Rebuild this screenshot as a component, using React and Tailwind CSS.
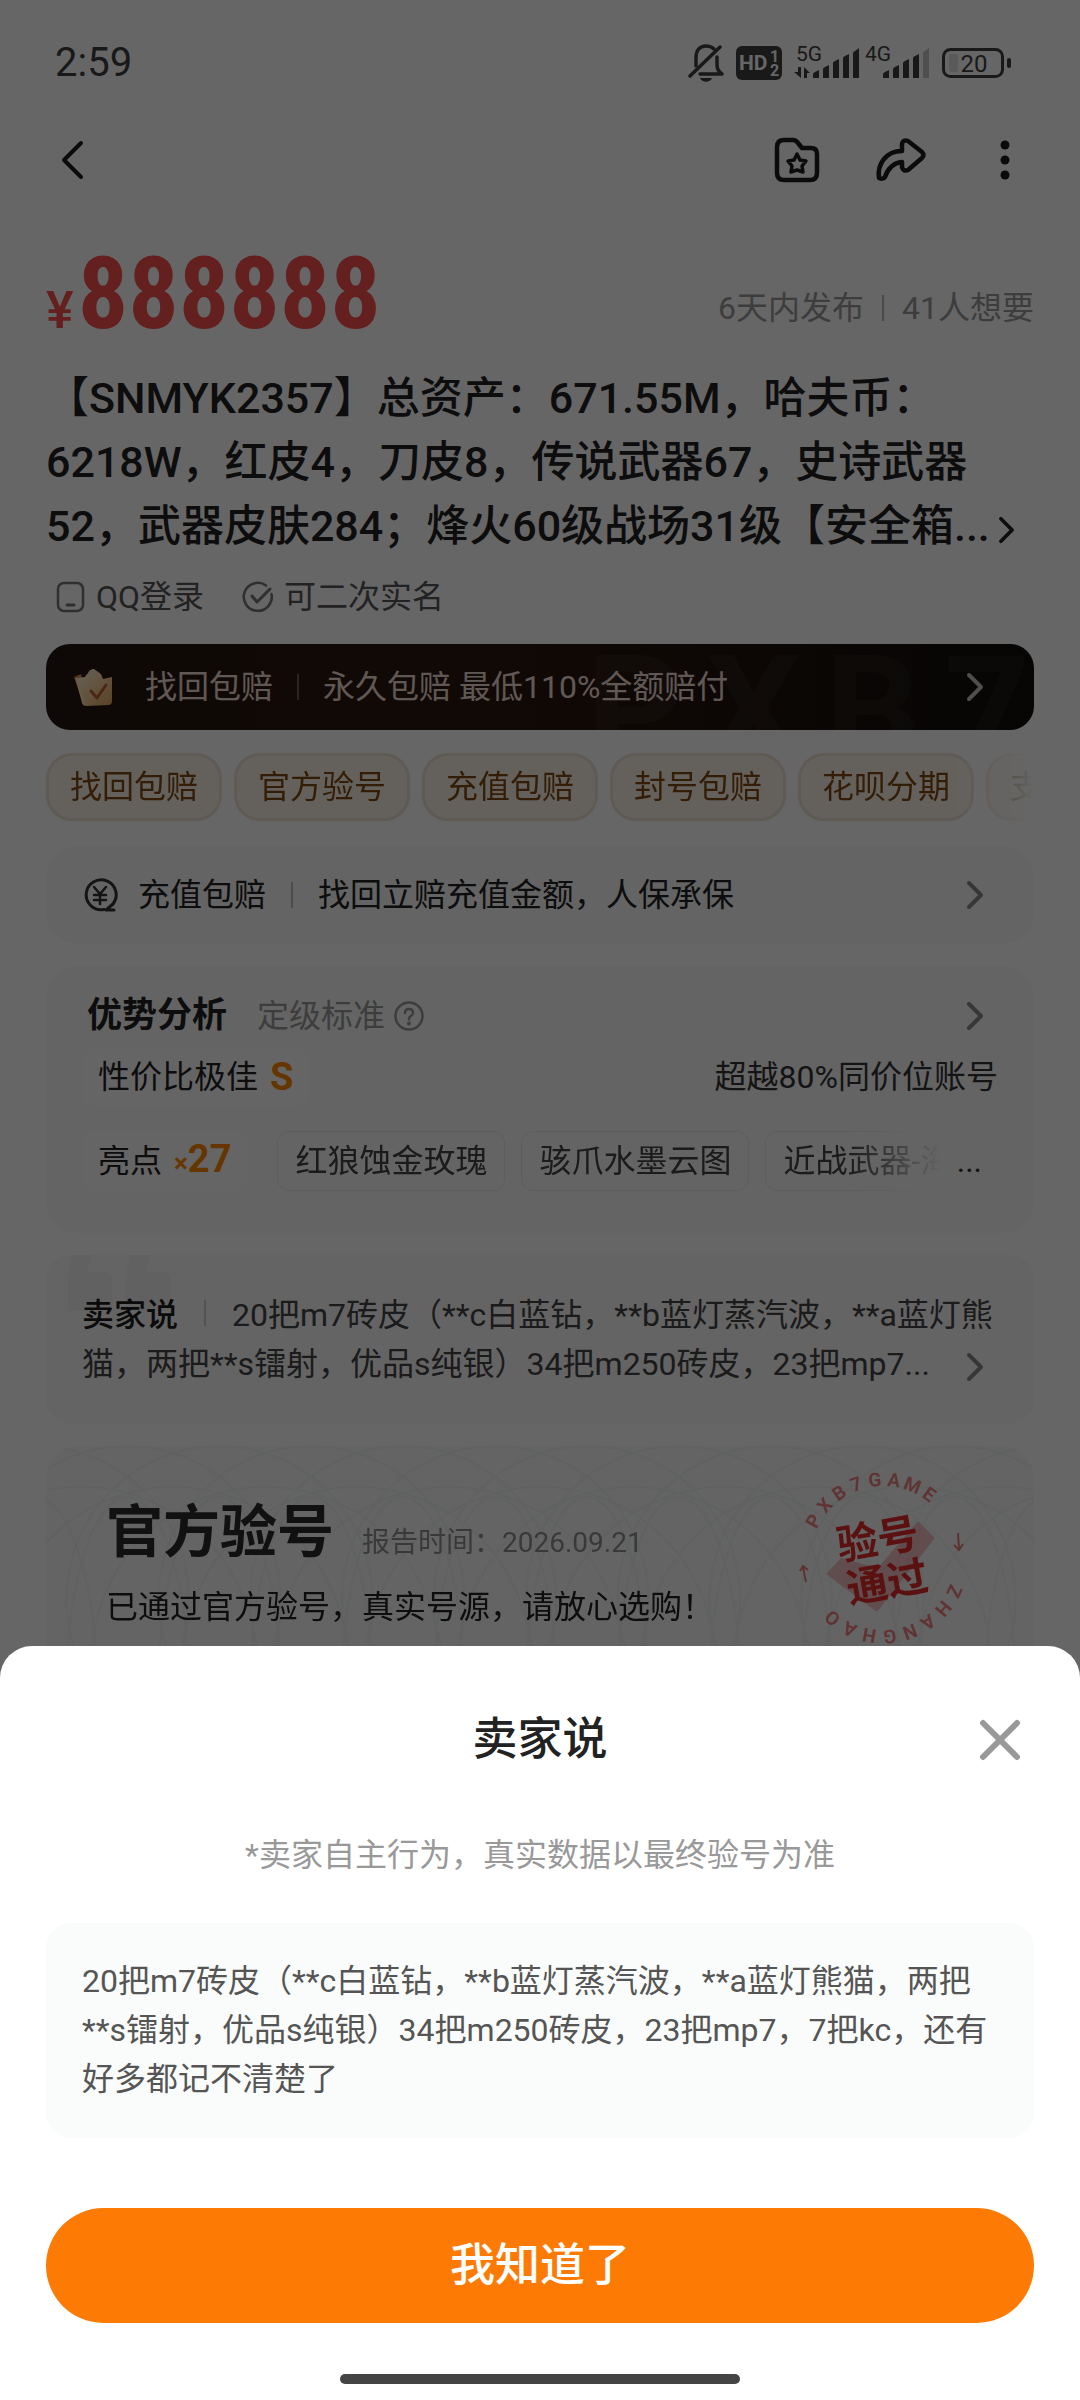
import React from "react";

const FONT = "font-['Roboto','Noto_Sans_CJK_SC',sans-serif]";

function Chevron({ className }) {
  return (
    <svg viewBox="0 0 18 30" className={className} fill="none" stroke="currentColor" strokeWidth="4" strokeLinecap="round" strokeLinejoin="round" aria-hidden="true">
      <path d="M3 3 L15 15 L3 27" />
    </svg>
  );
}

function BellOff() {
  return (
    <svg viewBox="0 0 36 40" className="h-10 w-9" fill="none" stroke="currentColor" strokeWidth="3.5" strokeLinecap="round" strokeLinejoin="round" aria-hidden="true">
      <path d="M8 23 V15 C8 7 12 3 18 3 C21 3 24 4 26 6" />
      <path d="M29 14 V22 C29 26 31 29 34 31 H12" />
      <path d="M32 4 L2 33" />
      <path d="M12 35 h12 c-2 5 -10 5 -12 0 z" fill="currentColor" stroke="none" />
    </svg>
  );
}

function HdBadge() {
  return (
    <svg viewBox="0 0 46 34" className="h-[34px] w-[46px]" role="img" aria-label="HD 1 2">
      <rect width="46" height="34" rx="6" fill="currentColor" />
      <g fill="white" fontWeight="700" className="font-['Roboto',sans-serif]">
        <text x="3" y="24" fontSize="21">HD</text>
        <text x="34" y="16" fontSize="16">1</text>
        <text x="34" y="30" fontSize="16">2</text>
      </g>
    </svg>
  );
}

function Signal({ label, arrows, last }) {
  return (
    <svg viewBox="0 0 66 36" className="h-9 w-[66px] overflow-visible" fill="currentColor" role="img" aria-label={label}>
      <text x={arrows ? 2 : 1} y="16" fontSize="21" className="font-['Roboto',sans-serif]">{label}</text>
      {arrows && (
        <path d="M4 22 h3 v11 L0 27 h4 z M10 33 V22 l6 6 h-3 v5 z" />
      )}
      <path d="M19 33 v-4 q0 -1 2 -2 l4 -2 v8 z" />
      <path d="M29 33 v-9 q0 -1 2 -2 l4 -2 v13 z" />
      <path d="M39 33 v-15 q0 -1 2 -2 l4 -2 v19 z" />
      <path d="M49 33 v-20 q0 -1 2 -2 l4 -2 v24 z" />
      <path d="M59 33 v-25 q0 -1 2 -2 l4 -3 v30 z" opacity={last} />
    </svg>
  );
}

function Battery() {
  return (
    <svg viewBox="0 0 70 30" className="h-[30px] w-[70px]" role="img" aria-label="20%">
      <rect x="1.5" y="1.5" width="59" height="27" rx="7" fill="none" stroke="currentColor" strokeWidth="3" />
      <rect x="7" y="6" width="9" height="18" rx="2" fill="currentColor" opacity="0.15" />
      <rect x="65" y="10" width="4" height="10" rx="2" fill="currentColor" />
      <text x="32" y="24" fontSize="24" textAnchor="middle" fill="currentColor" className="font-['Roboto',sans-serif]">20</text>
    </svg>
  );
}

function StatusBar() {
  return (
    <div className="mt-[30px] flex h-[66px] items-center justify-between pr-[68px] pl-[55px] text-[#3f3f3f]">
      <span className="text-[40px] leading-[48px]">2:59</span>
      <div className="flex items-center">
        <BellOff />
        <div className="ml-3"><HdBadge /></div>
        <div className="ml-3"><Signal label="5G" arrows last={1} /></div>
        <div className="ml-1"><Signal label="4G" last={0.3} /></div>
        <div className="ml-3"><Battery /></div>
      </div>
    </div>
  );
}

function NavBar() {
  return (
    <nav className="flex h-32 items-center justify-between pr-[63px] pl-[60px] text-[#1c1c1c]">
      <button type="button" aria-label="返回">
        <svg viewBox="0 0 26 44" className="h-11 w-[26px]" fill="none" stroke="currentColor" strokeWidth="4" strokeLinecap="round" strokeLinejoin="round">
          <path d="M21 5 L4 22 L21 39" />
        </svg>
      </button>
      <div className="flex items-center">
        <button type="button" aria-label="收藏夹">
          <svg viewBox="0 0 48 48" className="h-12 w-12" fill="none" stroke="currentColor" strokeWidth="4.5" strokeLinejoin="round">
            <path d="M4 11 Q4 4 11 4 H20 Q23 4 25 7 L29 12 H38 Q44 12 44 18 V37 Q44 44 37 44 H11 Q4 44 4 37 Z" />
            <path d="M24 18 l3 6 6 1 -4 5 1 6 -6 -2 -6 2 1 -6 -4 -5 6 -1 z" strokeWidth="3.5" />
          </svg>
        </button>
        <button type="button" aria-label="分享" className="ml-[54px]">
          <svg viewBox="0 0 52 48" className="h-12 w-[52px]" fill="none" stroke="currentColor" strokeWidth="4.5" strokeLinejoin="round">
            <path d="M27 15 V8 Q28 3 33 5 L47 16 Q50 19 47 22 L33 34 Q28 36 27 31 V26 C18 27 13 32 10 41 Q8 44 4 42 C2 28 11 15 27 15 Z" />
          </svg>
        </button>
        <button type="button" aria-label="更多" className="ml-[70px]">
          <svg viewBox="0 0 20 48" className="h-12 w-5" fill="currentColor">
            <circle cx="8" cy="9" r="4.5" />
            <circle cx="8" cy="24" r="4.5" />
            <circle cx="8" cy="39" r="4.5" />
          </svg>
        </button>
      </div>
    </nav>
  );
}

function PriceRow() {
  return (
    <div className="flex items-end justify-between pt-5">
      <div className="flex items-baseline text-[#fa4f4f]">
        <span className="mr-1 text-[52px] leading-[60px] font-medium">¥</span>
        <strong className="font-['Roboto_Condensed','Liberation_Sans_Narrow','Roboto',sans-serif] text-[100px] leading-[100px] font-bold">888888</strong>
      </div>
      <div className="flex items-center pb-3 text-[32px] leading-[48px] text-[#999999]">
        <span>6天内发布</span>
        <span className="mx-[18px] h-[26px] w-[2px] bg-[#b5b5b5]" />
        <span>41人想要</span>
      </div>
    </div>
  );
}

function LoginTags() {
  return (
    <ul className="flex h-[78px] items-center pl-[10px] text-[32px] leading-[48px] text-[#555555]">
      <li className="flex items-center gap-[10px]">
        <svg viewBox="0 0 30 32" className="h-8 w-[30px]" fill="none" stroke="#777777" strokeWidth="2.5" strokeLinecap="round" aria-hidden="true">
          <rect x="2" y="2" width="25" height="28" rx="6" />
          <path d="M11 24 h7" strokeWidth="3" />
        </svg>
        <span>QQ登录</span>
      </li>
      <li className="ml-[38px] flex items-center gap-[10px]">
        <svg viewBox="0 0 32 32" className="h-8 w-8" fill="none" stroke="#777777" strokeWidth="3" strokeLinecap="round" strokeLinejoin="round" aria-hidden="true">
          <path d="M24 4.5 A14 14 0 1 0 29.5 13" strokeWidth="2.5" />
          <path d="M10 15 L15 21 L28 8" />
        </svg>
        <span>可二次实名</span>
      </li>
    </ul>
  );
}

function Crown() {
  return (
    <svg viewBox="0 0 44 44" className="h-11 w-11" aria-hidden="true">
      <defs>
        <linearGradient id="crownFace" x1="0" y1="0" x2="1" y2="1">
          <stop offset="0" stopColor="#fff6e0" />
          <stop offset="0.6" stopColor="#f3c98f" />
          <stop offset="1" stopColor="#e0a263" />
        </linearGradient>
      </defs>
      <path d="M2 12 L9 9 L16 38 L10 36 Z" fill="#d9803c" />
      <path d="M13 12 Q14 10 16 8 Q18 4 22 4 L29 9 L31 14 L40 12 V36 Q40 39 37 40 L14 41 Q11 41 10 38 L4 13 Z" fill="url(#crownFace)" />
      <path d="M4 13 L12 39" stroke="#ffdfae" strokeWidth="2" />
      <path d="M19 26 L25 33 L34 20" fill="none" stroke="#b86236" strokeWidth="3" strokeLinecap="round" strokeLinejoin="round" />
    </svg>
  );
}

function Banner() {
  return (
    <a href="#recover" className="relative mt-2 flex items-center overflow-hidden rounded-3xl bg-linear-to-r from-[#241811] via-[#2b170e] via-45% to-[#110e0c] py-[19px] pr-[50px] pl-[26px] text-[32px] leading-[48px] text-[#f0dcd2]">
      <span className="absolute top-0 right-1 flex w-[444px] justify-between text-[150px] leading-[134px] font-bold text-white/4" aria-hidden="true">
        <span>P</span><span>X</span><span>B</span><span>7</span>
      </span>
      <Crown />
      <span className="ml-[29px]">找回包赔</span>
      <span className="mx-6 h-[26px] w-[2px] bg-[#6b5a50]" />
      <span>永久包赔 最低110%全额赔付</span>
      <Chevron className="ml-auto h-[30px] w-[18px] text-[#c9c2be]" />
    </a>
  );
}

const SERVICE_TAGS = ["找回包赔", "官方验号", "充值包赔", "封号包赔", "花呗分期", "支付保障"];

function ServiceTags() {
  return (
    <ul className="mt-[23px] flex gap-3 overflow-hidden [mask-image:linear-gradient(to_right,black_92%,transparent)]">
      {SERVICE_TAGS.map((t) => (
        <li key={t} className="shrink-0 rounded-[26px] border-3 border-[#efe0d5] bg-[#fbf3e8] px-[21px] py-[7px] text-[32px] leading-[48px] text-[#7f4a12]">
          {t}
        </li>
      ))}
    </ul>
  );
}

function RechargeCard() {
  return (
    <a href="#recharge" className="mt-[25px] flex items-center rounded-[32px] bg-[#fafafa] py-[25px] pr-[50px] pl-9 text-[32px] leading-[48px] text-[#222222]">
      <svg viewBox="0 0 36 36" className="h-9 w-9" fill="none" stroke="#333333" strokeWidth="3" strokeLinecap="round" strokeLinejoin="round" aria-hidden="true">
        <path d="M31 27 A15 15 0 1 0 22 32.5" />
        <path d="M31 27 L24 33 H32" />
        <path d="M12 10 L18 17 L24 10 M18 17 V27 M12 18 H24 M12 23 H24" strokeWidth="2.5" />
      </svg>
      <span className="ml-5">充值包赔</span>
      <span className="mx-[25px] h-[26px] w-[2px] bg-[#bdbdbd]" />
      <span>找回立赔充值金额，人保承保</span>
      <Chevron className="ml-auto h-[30px] w-[18px] text-[#8a8a8a]" />
    </a>
  );
}

const HIGHLIGHTS = ["红狼蚀金玫瑰", "骇爪水墨云图", "近战武器-海"];

function AnalysisCard() {
  return (
    <section className="mt-[22px] rounded-[32px] bg-[#fafafa] px-9 pt-[26px] pb-[42px] text-[32px] leading-[48px] text-[#222222]">
      <header className="flex items-center pr-[14px] pl-[5px]">
        <h2 className="text-[35px] font-bold">优势分析</h2>
        <span className="ml-[30px] text-[#999999]">定级标准</span>
        <svg viewBox="0 0 32 32" className="ml-2 h-8 w-8" fill="none" stroke="#999999" strokeWidth="2.5" strokeLinecap="round" aria-hidden="true">
          <circle cx="16" cy="16" r="13.5" />
          <path d="M12 13 Q12 9 16 9 Q20 9 20 13 Q20 15 17.5 16.5 Q16 17.5 16 19.5" />
          <circle cx="16" cy="23.5" r="0.8" fill="#999999" />
        </svg>
        <Chevron className="ml-auto h-[30px] w-[18px] text-[#8a8a8a]" />
      </header>
      <div className="mt-2 flex items-center justify-between">
        <p className="flex items-center rounded-xl bg-[#fdfdfd] px-4 py-[5px]">
          性价比极佳
          <strong className="ml-3 text-[38px] text-[#ff8800]">S</strong>
        </p>
        <span className="text-[#333333]">超越80%同价位账号</span>
      </div>
      <div className="mt-[25px] flex items-center">
        <p className="flex items-center rounded-xl bg-[#fdfdfd] px-4 py-1">
          亮点
          <strong className="ml-3 text-[38px] text-[#ff8800]"><span className="text-[26px]">×</span>27</strong>
        </p>
        <ul className="ml-[30px] flex w-0 grow gap-4 overflow-hidden text-[#444444] [mask-image:linear-gradient(to_right,black_86%,transparent)]">
          {HIGHLIGHTS.map((h) => (
            <li key={h} className="shrink-0 rounded-xl border border-[#e9e9e9] bg-[#fbfbfb] px-[17px] py-[5px]">{h}</li>
          ))}
        </ul>
        <span className="mr-4 ml-4 text-[#333333]">...</span>
      </div>
    </section>
  );
}

function SellerCard() {
  return (
    <section className="relative mt-[22px] rounded-3xl bg-[#fafafa] px-9 pt-9 pb-[35px] text-[32px] leading-[49px] text-[#444444]">
      <svg viewBox="0 0 104 56" className="absolute top-0 left-[22px] h-14 w-[104px]" fill="#f2f2f2" aria-hidden="true">
        <path d="M5 0 H24 L19 17 H38 Q44 17 44 23 V56 H0 V30 Q0 12 5 0 Z" />
        <path d="M63 0 H82 L77 17 H96 Q102 17 102 23 V56 H58 V30 Q58 12 63 0 Z" />
      </svg>
      <p className="relative">
        <span className="font-medium text-[#1c1c1c]">卖家说</span>
        <span className="mx-[26px] inline-block h-[26px] w-[2px] bg-[#cfcfcf]" />
        20把m7砖皮（**c白蓝钻，**b蓝灯蒸汽波，**a蓝灯熊猫，两把**s镭射，优品s纯银）34把m250砖皮，23把mp7...
        <Chevron className="ml-9 inline-block h-[30px] w-[18px] text-[#8a8a8a]" />
      </p>
    </section>
  );
}

const RING = [
  ..."PXB7GAME".split("").map((ch, i) => ({ ch, a: -62 + i * 14 })),
  ..."ZHANGHAO".split("").map((ch, i) => ({ ch, a: 115 + i * 15 })),
];

function Stamp() {
  return (
    <svg viewBox="-90 -90 180 180" className="absolute top-[22px] right-[61px] h-[180px] w-[180px]" role="img" aria-label="验号通过">
      <path d="M-57 16 L-42 0 L-5 10 L35 -37 L52 -20 L-6 54 Z" fill="#e85555" opacity="0.35" />
      <g fill="#ee5a5a" opacity="0.75" fontSize="19" fontWeight="700" textAnchor="middle" className="font-['Roboto',sans-serif]">
        {RING.map(({ ch, a }, i) => (
          <text key={i} transform={`rotate(${a}) translate(0 -72)`}>{ch}</text>
        ))}
      </g>
      <g fill="none" stroke="#ee5a5a" strokeWidth="2" opacity="0.8">
        <path d="M-77 24 L-80 9 M-83 13 L-80 8 L-75 12" />
        <path d="M75 -25 L76 -9 M71 -13 L76 -8 L80 -14" />
      </g>
      <g transform="rotate(-10)" fill="#e62b2b" fontSize="41" fontWeight="700" textAnchor="middle" className="font-['Noto_Sans_CJK_SC',sans-serif]">
        <text x="-2" y="-5">验号</text>
        <text x="0" y="39">通过</text>
      </g>
    </svg>
  );
}

const WAVES = [0, 1, 2, 3, 4, 5, 6, 7, 8, 9, 10, 11];

function VerifyCard() {
  return (
    <section className="relative mt-[22px] overflow-hidden rounded-[32px] bg-[#f9fafa] px-[60px] pt-[51px] pb-[60px]">
      <svg viewBox="0 0 988 240" preserveAspectRatio="xMidYMin slice" className="absolute inset-0 h-full w-full" fill="none" stroke="#f1f3f3" strokeWidth="2" aria-hidden="true">
        {WAVES.map((i) => (
          <g key={i}>
            <circle cx={i * 90} cy="150" r="150" />
            <circle cx={i * 90 + 45} cy="210" r="170" />
            <ellipse cx={i * 90} cy="240" rx="60" ry="190" />
          </g>
        ))}
      </svg>
      <Stamp />
      <div className="relative flex items-end">
        <h2 className="text-[57px] leading-[72px] font-bold text-[#2c2c2c]">官方验号</h2>
        <span className="ml-7 pb-[2px] text-[28px] leading-[48px] text-[#8f8f8f]">报告时间：2026.09.21</span>
      </div>
      <p className="relative mt-[14px] text-[32px] leading-[48px] text-[#222222]">已通过官方验号，真实号源，请放心选购！</p>
    </section>
  );
}

function SellerSheet() {
  return (
    <div role="dialog" aria-modal="true" aria-labelledby="sheet-title" className="w-full rounded-t-[32px] bg-white px-[46px] pt-16 pb-4">
      <header className="relative flex items-center justify-center">
        <h2 id="sheet-title" className="text-[45px] leading-[60px] font-medium text-[#222222]">卖家说</h2>
        <button type="button" aria-label="关闭" className="absolute right-3">
          <svg viewBox="0 0 44 44" className="h-11 w-11" fill="none" stroke="#999999" strokeWidth="6" strokeLinecap="round">
            <path d="M5 5 L39 39 M39 5 L5 39" />
          </svg>
        </button>
      </header>
      <p className="mt-[61px] text-center text-[32px] leading-[48px] text-[#999999]">*卖家自主行为，真实数据以最终验号为准</p>
      <p className="mt-11 rounded-3xl bg-[#fafcfb] px-9 py-[34px] text-[32px] leading-[49px] text-[#555555]">
        20把m7砖皮（**c白蓝钻，**b蓝灯蒸汽波，**a蓝灯熊猫，两把**s镭射，优品s纯银）34把m250砖皮，23把mp7，7把kc，还有好多都记不清楚了
      </p>
      <button type="button" className="mt-[70px] w-full rounded-full bg-[#fd7b05] pt-7 pb-[27px] text-[45px] leading-[60px] font-medium text-white">
        我知道了
      </button>
      <div className="mx-auto mt-[51px] h-[10px] w-[400px] rounded-full bg-[#444444]" />
    </div>
  );
}

export default function App() {
  return (
    <div className={`${FONT} relative min-h-screen overflow-hidden bg-white`}>
      <StatusBar />
      <NavBar />
      <main className="px-[46px]">
        <PriceRow />
        <h1 className="mt-[22px] text-[43px] leading-[64px] font-medium text-[#222222]">
          【SNMYK2357】总资产：671.55M，哈夫币：6218W，红皮4，刀皮8，传说武器67，史诗武器52，武器皮肤284；烽火60级战场31级【安全箱...
          <Chevron className="ml-2 inline-block h-[28px] w-[17px]" />
        </h1>
        <LoginTags />
        <Banner />
        <ServiceTags />
        <RechargeCard />
        <AnalysisCard />
        <SellerCard />
        <VerifyCard />
      </main>
      <div className="fixed inset-0 flex items-end bg-black/60">
        <SellerSheet />
      </div>
    </div>
  );
}
